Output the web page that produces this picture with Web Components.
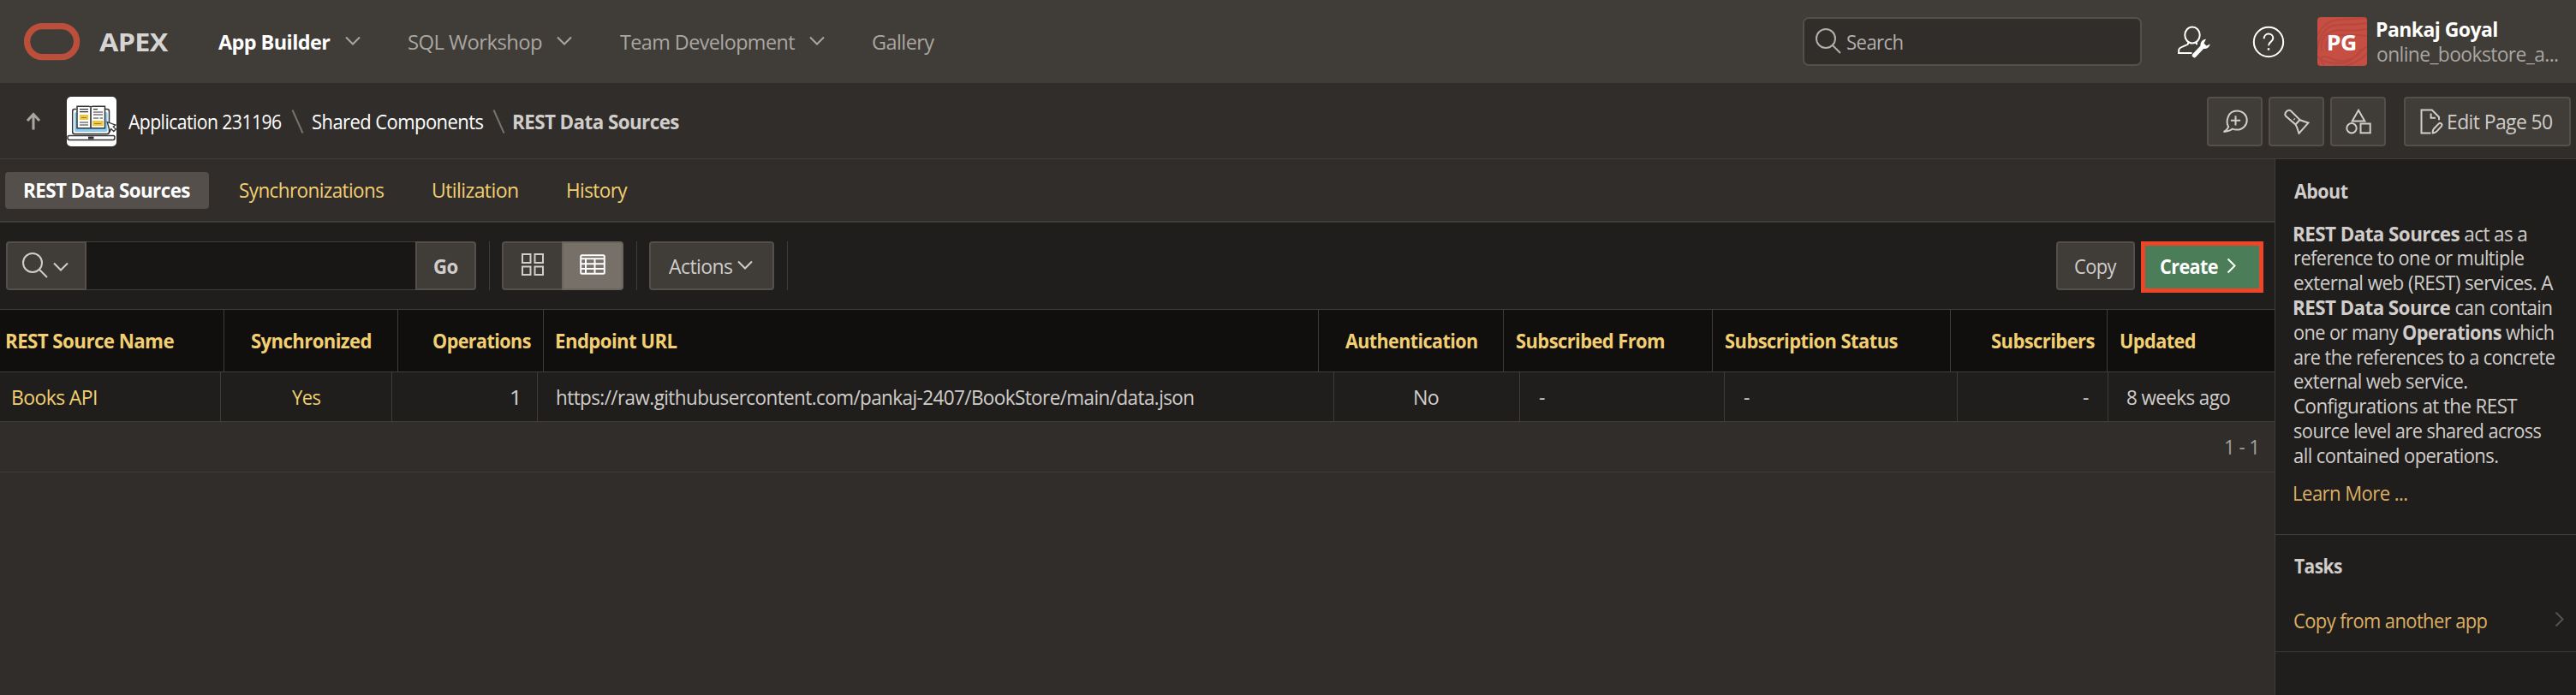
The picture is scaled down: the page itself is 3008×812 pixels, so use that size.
<!DOCTYPE html>
<html lang="en">
<head>
<meta charset="utf-8">
<title>REST Data Sources</title>
<style>
html,body{margin:0;height:812px;overflow:hidden;background:#312d2a}
body{font:400 23px "Open Sans","Noto Sans",sans-serif;color:#d0cdca;width:3008px}
</style>
</head>
<body>
<apex-app></apex-app>
<script>
const define=(name,html,setup)=>customElements.define(name,class extends HTMLElement{
  constructor(){super();this.attachShadow({mode:'open'})}
  connectedCallback(){
    if(this.done)return;this.done=true;
    this.shadowRoot.innerHTML=typeof html==='function'?html(this):html;
    if(setup)setup(this);
  }
});

/* One line of text whose inked width is set by the w attribute. */
const ctx=document.createElement('canvas').getContext('2d');
const family='"Open Sans","Noto Sans",sans-serif';
const tracking='-0.6px';
define('fit-text',`<style>
:host{display:block;flex:none;white-space:nowrap;line-height:28px;height:28px;letter-spacing:${tracking}}
span{display:inline-block;white-space:pre;transform-origin:0 50%}
::slotted(b){font-weight:700}
</style><span><slot></slot></span>`,el=>{
  const size=+(el.getAttribute('size')||23),weight=el.getAttribute('weight')||460,w=+el.getAttribute('w');
  const parts=[...el.childNodes].filter(n=>n.textContent);
  let adv=0,left=0,right=0;
  ctx.letterSpacing=tracking;
  parts.forEach((n,i)=>{
    ctx.font=`${n.nodeName==='B'?700:weight} ${size}px ${family}`;
    const m=ctx.measureText(n.textContent);
    if(i===0)left=-m.actualBoundingBoxLeft;
    right=adv+m.actualBoundingBoxRight;adv+=m.width;
  });
  const k=w/(right-left);
  el.style.width=w+'px';el.style.fontSize=size+'px';el.style.fontWeight=weight;
  el.shadowRoot.querySelector('span').style.transform=`translateX(${-left*k}px) scaleX(${k})`;
});

const icons={
  logo:[66,44,'<rect x="3.6" y="3.6" width="58" height="36" rx="18" stroke-width="7.4"/>'],
  down:[18,12,'<path d="M1 1.5 9 9.5l8-8"/>'],
  right:[12,20,'<path d="m1.5 1.5 8 8-8 8"/>'],
  search:[30,30,'<circle cx="12" cy="12" r="11"/><path d="m20 20 9 9"/>'],
  help:[38,38,'<circle cx="19" cy="19" r="17.2"/><path d="M13.7 15.2c0-3.4 2.3-5.6 5.3-5.6s5.3 2 5.3 5c0 4.4-5.3 4.2-5.3 8.6"/><path d="M19 26.2v2.4" stroke-width="2.4"/>'],
  admin:[38,38,'<ellipse cx="17" cy="11" rx="8.7" ry="9.6"/><path d="M12 19.5v1.8c0 1.2-9.6 3.8-10.4 5.8-.6 1.4-.5 3-.5 5h15.4M22 19.5v2.8"/><path d="M19.3 34.8 29 24.5" stroke-width="5" stroke-linecap="round"/><path d="M33 15.8c-5.2.5-7.6 5-6 9.3 3 3.5 9.3 2.3 10.8-3.6l-4.3 1.9-3-2.8z" fill="currentColor" stroke="none"/>'],
  up:[18,22,'<path d="M9 20.5V3M2 10l7-7.5L16 10" stroke-width="3"/>'],
  slash:[15,30,'<path d="m1.5 1.5 12 27"/>'],
  comment:[30,28,'<path d="M7.2 20.3C3.8 14 6.1 1.5 17 1.5c7 0 11.7 5 11.7 10.9S24 23.6 17 23.6c-2.2 0-3.8-.3-5.2-1-2.3 2-5.5 3.2-10.2 3.4 3-1.8 4.8-3.6 5.6-5.7z"/><path d="M15.5 7.2v11.2M9.9 12.8h11.2"/>'],
  torch:[30,30,'<path d="M2 8.5C-.2 5.200 4.5-.1 8.300 2.700L18.500 13c3 1.600 7 2.300 10 3.500L17.500 28.800c-1.200-3.200-1.700-6.900-4-10.300zM18.500 13l-5 5.500"/><path d="m11.700 11.700.9.9" stroke-width="2.200"/>'],
  shapes:[30,30,'<path d="M15 1.800 22.300 14.500H7.700z"/><circle cx="7" cy="22.800" r="5.700"/><rect x="17.500" y="17.500" width="11.200" height="10.800"/>'],
  edit:[27,30,'<path d="M12.500 28.500H1.500v-27h12.300l8.200 8.200v3.600"/><path d="M12.600 5.500v5.200H18"/><path d="M14.800 28.500c-.3-2.300.3-4 1.400-5.300l5.400-5.600c2-2 5.100.6 3.200 3.100l-5.300 5.700c-1.200 1.200-2.700 2-4.700 2.100z"/>'],
  grid:[26,26,'<path d="M1 1h9.500v10H1zM15.500 1H25v10h-9.500zM1 15.500h9.500v9.500H1zM15.500 15.500H25v9.500h-9.500z"/>'],
  table:[30,24,'<rect x="1.200" y="1.200" width="27.600" height="21.600" rx="1.500"/><path d="M1 5.300h28M1 11.200h28M1 17h28M7 5.300V23M17.500 5.300V23"/>'],
  book:[58,58,'<rect width="58" height="58" fill="#fff" stroke="none"/><rect x="9" y="18" width="38.500" height="23" rx="2" fill="#8fcdf0" stroke="none"/><path d="M11 14.500H9q-2.300 0-2.300 2.500v24q0 2.500 2.300 2.500h38q2.500 0 2.500-2.500V17q0-2.500-2.500-2.500h-2M2.500 45.500h52q1.500 0 1.500 2.500t-2 2.500h-51q-2 0-2-2.500t1.500-2.500z" stroke-width="1.500"/><path d="M12 11.300h13.500q2.500 0 2.500 1.500 0-1.500 2.500-1.500h14v25.500H12z" fill="#fff" stroke-width="1.500"/><path d="M28 13v24" stroke-width="1.700"/><path d="M15 21h10.200v6H15zM30 28h12.700v6.200H30z" fill="#f0c743" stroke="none"/><path d="M15 14.600h10M15 17.600h10M15 30h10M15 33h10M31 14.600h5M31 18h11M31 21h11M31 25h6M38.500 25h3.500" stroke-width="1.200"/><path d="M17 24.500h6M32 31.500h8" stroke="#8b7331" stroke-width=".9"/><path d="M25 48h6.500" stroke-width="3"/><path d="m47.200 29.500 9.700 3.600-2.600 2 3 2.900-2.500 2.500-3-3-1.400 2.900z" fill="#fff" stroke-width="1.300"/>']
};
define('ui-icon',el=>{
  const [w,h,body]=icons[el.getAttribute('name')];
  return `<style>:host{display:block;flex:none;width:${w}px;height:${h}px}svg{display:block}</style>
<svg width="${w}" height="${h}" viewBox="0 0 ${w} ${h}" fill="none" stroke="currentColor" stroke-width="${el.getAttribute('stroke')||2}">${body}</svg>`});

define('ui-button',`<style>
:host{box-sizing:border-box;display:flex;align-items:center;justify-content:center;flex:none;height:58px;background:#403c37;border:2px solid #544f4a;border-radius:4px;color:#d0cdca}
:host([tight]){height:57px}
</style><slot></slot>`);

define('user-avatar',`<style>
:host{display:grid;place-items:center;width:58px;height:57px;border-radius:4px;overflow:hidden;background:#c74f43;color:#fff;flex:none}
svg,fit-text{grid-area:1/1}
</style><svg width="58" height="57" fill="none" stroke="#b0463c" stroke-width="2" opacity=".65"><path d="M0 22Q8 4 25 3t33-2M0 38Q4 8 27 9q16 0 31-2M5 40Q2 17 26 15q16 2 32-1M11 40Q6 22 27 21q20-1 31 1M8 57Q-2 43 13 47q20 10 35-4 7-8 10-8M18 57q22 3 40-14M0 46q8 9 28 8 13-1 23-17"/></svg><fit-text w="32" weight="700" size="25">PG</fit-text>`);

define('app-header',`<style>
:host{display:flex;align-items:center;height:97px;background:#403c37;color:#a9a6a2}
.logo{color:#bb4f3b;margin:0 22px 0 28px}.apex{color:#d7d5d3}
.on{color:#fff}nav{display:flex;align-items:center;margin-left:58px}
nav ui-icon{margin:-1px 56px 0 17px}
.search{box-sizing:border-box;display:flex;align-items:center;width:396px;height:57px;border:2px solid #544f4a;border-radius:7px;background:#312d2a;margin-left:auto;color:#b2afab;padding-left:13px;gap:7px}
.admin{color:#fff;margin-left:42px}.help{color:#fff;margin:0 38px 0 49px}
.user{margin:0 21px 0 12px}
.search ui-icon{margin-top:-2px}.name{color:#fff;margin-bottom:1px}
</style>
<ui-icon class="logo" name="logo"></ui-icon>
<fit-text class="apex" w="81" size="29" weight="700">APEX</fit-text>
<nav>
<fit-text class="on" w="131" size="24" weight="700">App Builder</fit-text><ui-icon name="down"></ui-icon>
<fit-text w="156" size="24">SQL Workshop</fit-text><ui-icon name="down"></ui-icon>
<fit-text w="204" size="24">Team Development</fit-text><ui-icon name="down"></ui-icon>
<fit-text w="73" size="24">Gallery</fit-text>
</nav>
<div class="search"><ui-icon name="search"></ui-icon><fit-text w="65">Search</fit-text></div>
<ui-icon class="admin" name="admin"></ui-icon>
<ui-icon class="help" name="help"></ui-icon>
<user-avatar></user-avatar>
<div class="user"><fit-text class="name" w="140" size="24" weight="700">Pankaj Goyal</fit-text><fit-text w="211">online_bookstore_a...</fit-text></div>`);

define('breadcrumb-bar',`<style>
:host{box-sizing:border-box;display:flex;align-items:center;height:89px;padding-top:1px;border-bottom:1px solid #403c37;background:#312d2a;color:#fff}
.up{color:#a9a6a2;margin:0 30px 0 30px}
.img{display:block;border-radius:5px;overflow:hidden;margin-right:14px;color:#333}
.s{color:#76726d;margin:0 10px 0 11px}
.cur{color:#d0cdca;margin-right:auto}
ui-button{width:65px;margin-right:7px}
.edit{width:195px;margin:0 6px 0 14px;gap:6px}
.edit fit-text{margin-right:3px}
</style>
<ui-icon class="up" name="up"></ui-icon>
<ui-icon class="img" name="book"></ui-icon>
<fit-text w="179" size="23">Application 231196</fit-text><ui-icon class="s" name="slash"></ui-icon>
<fit-text w="199" size="23">Shared Components</fit-text><ui-icon class="s" name="slash"></ui-icon>
<fit-text class="cur" w="193" weight="700">REST Data Sources</fit-text>
<ui-button><ui-icon name="comment"></ui-icon></ui-button>
<ui-button><ui-icon name="torch"></ui-icon></ui-button>
<ui-button><ui-icon name="shapes"></ui-icon></ui-button>
<ui-button class="edit"><ui-icon name="edit"></ui-icon><fit-text w="121">Edit Page 50</fit-text></ui-button>`);

define('tab-strip',`<style>
:host{box-sizing:border-box;display:flex;align-items:center;height:74px;border-bottom:2px solid #403c37;color:#f1cf72}
.on{box-sizing:border-box;width:238px;height:43px;border-radius:4px;background:#544f4a;color:#fff;display:flex;align-items:center;padding-left:23px;margin:0 36px 0 6px}
.g{margin-right:58px}
</style>
<div class="on"><fit-text w="193" weight="700">REST Data Sources</fit-text></div>
<fit-text class="g" w="168">Synchronizations</fit-text><fit-text class="g" w="99">Utilization</fit-text><fit-text w="70">History</fit-text>`);

define('report-toolbar',`<style>
:host{box-sizing:border-box;display:flex;align-items:center;height:101px;background:#201e1c;padding:0 13px 0 7px}
.find{width:94px;border-radius:4px 0 0 4px;gap:6px;padding-right:3px}
.find .c{margin-top:2px}.find .q{margin-top:-2px}
.in{box-sizing:border-box;width:384px;height:57px;background:#191715;border:solid #403c37;border-width:1px 0}
.go{width:71px;border-radius:0 4px 4px 0}
i{width:1px;height:57px;background:#403c37;margin:0 14px 0 15px}
.a{width:70px;border-radius:4px 0 0 4px;border-right:0}
.b{width:72px;border-radius:0 4px 4px 0;background:#767069;border-color:#6b655f;color:#fff}
.a ui-icon,.b ui-icon{margin-top:-3px}
.act{width:146px;gap:6px;padding-right:3px}.act ui-icon{margin-top:-1px}
.copy{width:92px;margin:0 7px 0 auto}
.create{box-sizing:border-box;display:flex;align-items:center;width:143px;height:60px;margin-top:3px;border:5px solid #ee4427;background:#4c7d59;color:#fff;padding:0 0 2px 18px;gap:10px}
.create ui-icon{margin-top:-1px}
</style>
<ui-button tight class="find"><ui-icon class="q" name="search"></ui-icon><ui-icon class="c" name="down"></ui-icon></ui-button>
<div class="in"></div>
<ui-button tight class="go"><fit-text w="28" weight="700">Go</fit-text></ui-button><i></i>
<ui-button tight class="a"><ui-icon name="grid"></ui-icon></ui-button><ui-button tight class="b"><ui-icon name="table"></ui-icon></ui-button><i></i>
<ui-button tight class="act"><fit-text w="74">Actions</fit-text><ui-icon name="down"></ui-icon></ui-button><i></i>
<ui-button tight class="copy"><fit-text w="49">Copy</fit-text></ui-button>
<div class="create"><fit-text w="67" weight="700">Create</fit-text><ui-icon name="right"></ui-icon></div>`);

define('report-table',`<style>
:host{display:block}
.row{display:grid;border-bottom:1px solid #403c37}
.row>div{box-sizing:border-box;display:flex;align-items:center;border-right:1px solid #403c37}
.row>div:last-child{border-right:0}
.head{height:72px;border-top:1px solid #403c37;background:#110f0d;color:#f1cf72;grid-template-columns:262px 203px 170px 905px 216px 244px 278px 183px 1fr}
.head>div{padding:0 14px 1px 15px}.head>div:first-child{padding-left:8px}
.body{height:57px;background:#201e1c;grid-template-columns:258px 200px 170px 930px 217px 239px 272px 176px 1fr}
.body>div{padding:0 22px}.body>div:first-child{padding-left:15px}
.row>.c{justify-content:center;padding-left:0;padding-right:0}.row>.r{justify-content:flex-end}
.y{color:#f1cf72}
.foot{display:flex;align-items:center;justify-content:flex-end;height:58px;padding-right:21px;border-bottom:1px solid #403c37;color:#a3a09d}
.foot fit-text{margin-top:-1px}
</style>
<div class="row head">
<div><fit-text w="195" weight="700">REST Source Name</fit-text></div>
<div class="c"><fit-text w="139" weight="700">Synchronized</fit-text></div>
<div class="r"><fit-text w="114" weight="700">Operations</fit-text></div>
<div><fit-text w="141" weight="700">Endpoint URL</fit-text></div>
<div class="c"><fit-text w="154" weight="700">Authentication</fit-text></div>
<div><fit-text w="172" weight="700">Subscribed From</fit-text></div>
<div><fit-text w="201" weight="700">Subscription Status</fit-text></div>
<div class="r"><fit-text w="120" weight="700">Subscribers</fit-text></div>
<div><fit-text w="87" weight="700">Updated</fit-text></div>
</div>
<div class="row body">
<div class="y"><fit-text w="98">Books API</fit-text></div>
<div class="c y"><fit-text w="33">Yes</fit-text></div>
<div class="r"><fit-text w="8">1</fit-text></div>
<div><fit-text w="744">https://raw.githubusercontent.com/pankaj-2407/BookStore/main/data.json</fit-text></div>
<div class="c"><fit-text w="28">No</fit-text></div>
<div><fit-text w="7">-</fit-text></div>
<div><fit-text w="7">-</fit-text></div>
<div class="r"><fit-text w="7">-</fit-text></div>
<div><fit-text w="120">8 weeks ago</fit-text></div>
</div>
<div class="foot"><fit-text w="36">1 - 1</fit-text></div>`);

define('side-panel',`<style>
:host{box-sizing:border-box;display:block;background:#201e1c;width:351px;height:626px}
section{box-sizing:border-box;padding-left:22px;border-bottom:1px solid #403c37}
.about{height:439px;padding-top:23px}.tasks{height:137px;padding-top:22px}
.p{padding-top:21.600px}.p fit-text{height:28.800px;line-height:28.800px}
.link{color:#dcae63}.more{margin-top:15px}
.item{display:flex;align-items:center;justify-content:space-between;padding-right:13px;margin-top:36px}
.item ui-icon{color:#56524e;margin-top:-2px}
</style>
<section class="about">
<fit-text w="63" weight="700">About</fit-text>
<div class="p">
<fit-text w="271"><b>REST Data Sources</b> act as a</fit-text>
<fit-text w="268">reference to one or multiple</fit-text>
<fit-text w="303">external web (REST) services. A</fit-text>
<fit-text w="301"><b>REST Data Source</b> can contain</fit-text>
<fit-text w="303">one or many <b>Operations</b> which</fit-text>
<fit-text w="304">are the references to a concrete</fit-text>
<fit-text w="202">external web service.</fit-text>
<fit-text w="261">Configurations at the REST</fit-text>
<fit-text w="288">source level are shared across</fit-text>
<fit-text w="238">all contained operations.</fit-text>
</div>
<fit-text class="link more" w="132">Learn More ...</fit-text>
</section>
<section class="tasks">
<fit-text w="56" weight="700">Tasks</fit-text>
<div class="item"><fit-text class="link" w="225">Copy from another app</fit-text><ui-icon name="right"></ui-icon></div>
</section>`);

define('apex-app',`<style>
:host{display:block;height:812px}
.cols{display:flex;height:626px}
main{box-sizing:border-box;flex:1;border-right:1px solid #403c37}
</style>
<app-header></app-header>
<breadcrumb-bar></breadcrumb-bar>
<div class="cols">
<main><tab-strip></tab-strip><report-toolbar></report-toolbar><report-table></report-table></main>
<side-panel></side-panel>
</div>`);
</script>
</body>
</html>
